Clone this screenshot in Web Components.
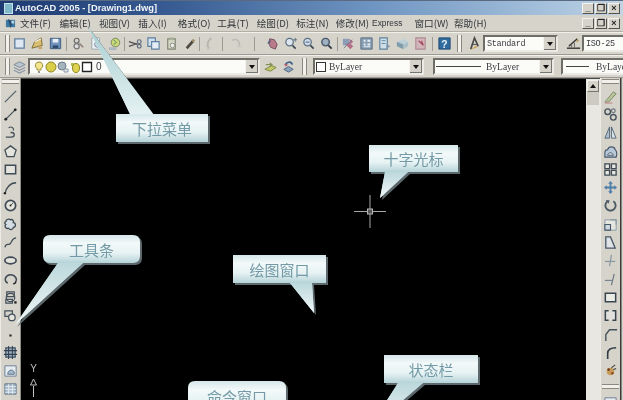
<!DOCTYPE html>
<html lang="zh"><head><meta charset="utf-8"><title>AutoCAD 2005</title>
<style>html,body{margin:0;padding:0;background:#000;overflow:hidden;width:623px;height:400px}</style>
</head><body>
<cad-app>
  <cad-titlebar slot="top">AutoCAD 2005 - [Drawing1.dwg]</cad-titlebar>
  <cad-menubar slot="top" items="文件(F)|编辑(E)|视图(V)|插入(I)|格式(O)|工具(T)|绘图(D)|标注(N)|修改(M)|Express|窗口(W)|帮助(H)"></cad-menubar>
  <cad-toolbar slot="top" h="23">
    <cad-grip></cad-grip>
    <cad-icon n="new"></cad-icon><cad-icon n="open"></cad-icon><cad-icon n="save"></cad-icon><cad-sep w="5"></cad-sep>
    <cad-icon n="plot"></cad-icon><cad-icon n="preview"></cad-icon><cad-icon n="publish"></cad-icon><cad-sep w="3"></cad-sep>
    <cad-icon n="cut"></cad-icon><cad-icon n="copy"></cad-icon><cad-icon n="paste"></cad-icon><cad-icon n="brush"></cad-icon><cad-sep w="2"></cad-sep>
    <cad-icon n="undo"></cad-icon><cad-sep w="9"></cad-sep><cad-icon n="redo"></cad-icon><cad-sep w="18"></cad-sep>
    <cad-icon n="pan"></cad-icon><cad-icon n="zoom"></cad-icon><cad-icon n="zoom2"></cad-icon><cad-icon n="zoom3"></cad-icon><cad-sep w="4"></cad-sep>
    <cad-icon n="props"></cad-icon><cad-icon n="grid"></cad-icon><cad-icon n="tool"></cad-icon><cad-icon n="cube"></cad-icon><cad-icon n="mark"></cad-icon><cad-sep w="6"></cad-sep>
    <cad-icon n="help"></cad-icon><cad-grip style="margin:0 3px 0 4px"></cad-grip>
    <cad-icon n="texta"></cad-icon>
    <cad-combo w="75" h="17" mono>Standard</cad-combo>
    <cad-icon n="dim" style="margin-left:6px"></cad-icon>
    <cad-combo w="45" h="17" mono noarrow>ISO-25</cad-combo>
  </cad-toolbar>
  <cad-toolbar slot="top" h="24">
    <cad-grip></cad-grip>
    <cad-icon n="layers"></cad-icon>
    <cad-combo w="232" h="17" layer>0</cad-combo>
    <cad-icon n="match" style="margin-left:1px"></cad-icon><cad-icon n="prev"></cad-icon><cad-grip style="margin:0 0 0 5px"></cad-grip>
    <cad-combo w="111" h="17" swatch style="margin-left:6px">ByLayer</cad-combo>
    <cad-combo w="121" h="17" line style="margin-left:9px">ByLayer</cad-combo>
    <cad-combo w="70" h="17" line short noarrow style="margin-left:7px">ByLayer</cad-combo>
  </cad-toolbar>
  <cad-dock slot="left" names="line xline pline polygon rect arc circle cloud spline ellipse earc insert block point hatch region table"></cad-dock>
  <cad-canvas slot="canvas"><cad-ucs></cad-ucs></cad-canvas>
  <cad-scroll slot="scroll"></cad-scroll>
  <cad-dock slot="right" names="erase ccopy mirror offset array move rotate scale stretch trim extend break join chamfer fillet explode"></cad-dock>

  <cad-crosshair slot="over"></cad-crosshair>
  <cad-callout slot="over" box="116,114,92,28" tail="top:130,88,27,153">下拉菜单</cad-callout>
  <cad-callout slot="over" box="369,145,89,27" tail="bottom:385,380,198,408">十字光标</cad-callout>
  <cad-callout slot="over" box="43,235,97,28" r="7" tail="bottom:58,15,325,83">工具条</cad-callout>
  <cad-callout slot="over" box="233,255,93,28" tail="bottom:290,314,313,312">绘图窗口</cad-callout>
  <cad-callout slot="over" box="384,355,94,28" tail="bottom:398,368,430,423">状态栏</cad-callout>
  <cad-callout slot="over" box="188,381,98,30" r="7">命令窗口</cad-callout>
</cad-app>
<script>
const ICONS={
new:`<path d="M3 3h10v10H3z" fill="#dfe8f2" stroke="#5f7f9f" stroke-width="1.4"/>`,
open:`<path d="M2 13l3-7 7-4 1 8z" fill="#d8c070" stroke="#7a6a38"/><path d="M5 6l7-3" stroke="#fff"/><path d="M9 11h4v3H9z" fill="#c9a66a"/>`,
save:`<path d="M2.5 2.5h11v11h-11z" fill="#6f92bd" stroke="#38577d"/><path d="M5 3h6v4H5z" fill="#e8eef4"/><path d="M5 10h6v3H5z" fill="#2e4a6e"/>`,
plot:`<circle cx="6" cy="5" r="2.6" fill="none" stroke="#6d6d6d" stroke-width="1.3"/><circle cx="6" cy="11" r="2.8" fill="#ddd" stroke="#777" stroke-width="1.3"/><path d="M9 8l4 4" stroke="#8a7a70" stroke-width="1.5"/>`,
preview:`<path d="M3 2h8v12H3z" fill="#eef2f6" stroke="#9aa6b0"/><circle cx="9" cy="9" r="3" fill="#cfe0ee" stroke="#6f8296"/><path d="M11 11l3 3" stroke="#555" stroke-width="1.4"/>`,
publish:`<circle cx="9" cy="7" r="4.6" fill="#c9d87a" stroke="#77845a"/><path d="M2 12h8v3H2z" fill="#aeb8c0"/><path d="M7 4l3 3-3 2" fill="none" stroke="#5b8a5a"/>`,
cut:`<path d="M1 6l9 3M1 11l9-3" stroke="#50504e" stroke-width="1.4"/><circle cx="12" cy="6" r="2" fill="none" stroke="#5d6a78" stroke-width="1.3"/><circle cx="12" cy="11" r="2" fill="none" stroke="#5d6a78" stroke-width="1.3"/>`,
copy:`<path d="M2 2h8v9H2z" fill="#cfdfee" stroke="#5c7fa0" stroke-width="1.2"/><path d="M6 6h8v8H6z" fill="#e4edf5" stroke="#5c7fa0" stroke-width="1.2"/>`,
paste:`<path d="M4 3h8v11H4z" fill="#d8d8c6" stroke="#7f8270" stroke-width="1.2"/><path d="M6 1.5h4v3H6z" fill="#aab09a"/><circle cx="9" cy="10" r="2.4" fill="#eee" stroke="#8a9080"/>`,
brush:`<path d="M4 12l7-8 2 2-7 8z" fill="#4e4a42"/><path d="M10 5l2-2 2 2-2 2z" fill="#a08c6a"/>`,
undo:`<path d="M10 2c-4 3-5 7-3 12" fill="none" stroke="#b6b6ae" stroke-width="2"/><path d="M4 10l3 4 3-3" fill="none" stroke="#c6c6c0"/>`,
redo:`<path d="M3 5c5-3 9 0 8 6" fill="none" stroke="#bdbdb5" stroke-width="1.7"/><path d="M8 10l3 3 3-3" fill="none" stroke="#c6c6c0"/>`,
pan:`<path d="M5 3c-1 3-1 6 1 9l5 2 2-5-3-5z" fill="#b97a8a" stroke="#705060"/><path d="M3 8l3-3" stroke="#4a5d78" stroke-width="1.5"/>`,
zoom:`<circle cx="7" cy="6.5" r="4" fill="#dbe5ee" stroke="#5d7082" stroke-width="1.3"/><path d="M10 10l3.5 3.5" stroke="#3d4a56" stroke-width="1.8"/><path d="M13 2v4M11 4h4" stroke="#5d7082"/>`,
zoom2:`<circle cx="7" cy="6.5" r="4" fill="#cfdbe8" stroke="#5d7082" stroke-width="1.3"/><path d="M10 10l3.5 3.5" stroke="#3d4a56" stroke-width="1.8"/><path d="M5 6.5h4" stroke="#3d5a78"/>`,
zoom3:`<circle cx="7" cy="6.5" r="4" fill="#9fb0c0" stroke="#46586a" stroke-width="1.5"/><path d="M10 10l3.5 3.5" stroke="#2f3a46" stroke-width="2"/>`,
props:`<path d="M2 3h7v7H2z" fill="#8a9cb8"/><path d="M9 3l4 3-3 3zM5 9l5 5 3-3-4-4z" fill="#b46e88"/><path d="M3 13l9-9" stroke="#7a7a8a"/>`,
grid:`<path d="M2 2h12v12H2z" fill="#8aa0b4" stroke="#536a80"/><path d="M5 4h2v2H5zM9 4h3v2H9zM5 8h2v2H5zM9 8h3v2H9zM5 11h7v1H5z" fill="#e6eef4"/>`,
tool:`<path d="M3 2h8v12H3z" fill="#cfdfe9" stroke="#5e829c" stroke-width="1.2"/><path d="M5 5h4M5 8h4" stroke="#5e829c"/><path d="M10 8l4 3-4 3z" fill="#7f97ab"/>`,
cube:`<path d="M2 6l7-3 5 3-5 3z" fill="#bdd0d8"/><path d="M2 6v5l7 3V9z" fill="#7f9cab"/><path d="M9 9v5l5-3V6z" fill="#a9c0c8"/>`,
mark:`<path d="M3 2h10v12H3z" fill="#d3b6bc" stroke="#ad8a94" stroke-width="1.2"/><path d="M6 5l5 5M9 5l2 5" stroke="#a84b60" stroke-width="1.4"/>`,
help:`<path d="M2 2h12v12H2z" fill="#2f6b9e" stroke="#204a70"/><text x="8" y="12.5" font-family="Liberation Sans" font-size="11" font-weight="700" fill="#e8f2fa" text-anchor="middle">?</text>`,
texta:`<path d="M4 14L8 2l4 9" fill="none" stroke="#4a4a48" stroke-width="1.7"/><path d="M5 9h6" stroke="#4a4a48"/><path d="M3 15l7-5 1 2z" fill="#c9a45a"/>`,
dim:`<path d="M1 13h14" stroke="#333" stroke-width="1.5"/><path d="M3 11l9-8" stroke="#333" stroke-width="1.5"/><path d="M6 12v-3M9 12V7" stroke="#666"/><path d="M12 3l2 2-3 2z" fill="#b59a50"/>`,
layers:`<path d="M2 6l6-3 6 3-6 3z" fill="#b9c6d0" stroke="#7a8a98"/><path d="M2 9l6 3 6-3M2 12l6 3 6-3" fill="none" stroke="#8a98a4" stroke-width="1.2"/>`,
match:`<path d="M2 11l7-4 5 2-6 4z" fill="#bfc76a" stroke="#7e8a40"/><path d="M3 6h6M7 4l3 2-3 2" stroke="#718040" fill="none"/>`,
prev:`<path d="M3 11l5-3 5 3-5 3z" fill="#8ba1ba" stroke="#4f6680"/><path d="M5 7c0-4 6-5 7-1" fill="none" stroke="#3f5f88" stroke-width="1.8"/><path d="M3 5l2 3 3-2z" fill="#b86070"/>`,
line:`<path d="M2 14L14 2" stroke="#55606a" stroke-width="1.4"/>`,
xline:`<path d="M2 14L14 2" stroke="#44505a" stroke-width="1.4"/><circle cx="3" cy="13" r="1.5" fill="#222"/><circle cx="13" cy="3" r="1.5" fill="#222"/>`,
pline:`<path d="M3 13h6c4 0 4-5 0-5H8" fill="none" stroke="#44505a" stroke-width="1.4"/><path d="M6 3c3-2 6 0 5 3" fill="none" stroke="#44505a" stroke-width="1.2"/>`,
polygon:`<path d="M8 2l6 4.5-2.3 7H4.3L2 6.500z" fill="#e4e4dd" stroke="#3f4b55" stroke-width="1.4"/>`,
rect:`<path d="M2.500 3.500h11v9h-11z" fill="#e4e4dd" stroke="#3f4b55" stroke-width="1.6"/>`,
arc:`<path d="M2 15C3 8 8 3 14 3" fill="none" stroke="#3f4b55" stroke-width="1.5"/><circle cx="2" cy="14" r="1.3" fill="#222"/>`,
circle:`<circle cx="8" cy="8" r="5.5" fill="#e4e4dd" stroke="#3f4b55" stroke-width="1.8"/><path d="M8 8l3-3" stroke="#3f4b55"/><circle cx="8" cy="8" r="1" fill="#222"/>`,
cloud:`<path d="M3 5c0-3 4-3 5-2 2-1 4 1 3 3 3 0 3 5 0 5 0 3-4 3-5 1-3 1-5-2-3-4-2-1-1-3 0-3z" fill="#d4dde2" stroke="#3f4b55" stroke-width="1.4"/>`,
spline:`<path d="M2 13c2-6 4-1 6-4s2-6 6-6" fill="none" stroke="#3f4b55" stroke-width="1.3"/>`,
ellipse:`<ellipse cx="8" cy="8" rx="6" ry="3.5" fill="#e4e4dd" stroke="#3f4b55" stroke-width="1.8"/>`,
earc:`<path d="M5 12C0 9 3 3 8 3s8 5 5 8" fill="none" stroke="#3f4b55" stroke-width="1.6"/><path d="M11 13l3-2" stroke="#222" stroke-width="1.6"/>`,
insert:`<path d="M4 2h8v5H4z" fill="none" stroke="#44505a" stroke-width="1.3"/><circle cx="8" cy="8" r="4.5" fill="none" stroke="#44505a" stroke-width="1.3"/><path d="M3 10h7v4H3z" fill="none" stroke="#44505a" stroke-width="1.3"/><rect x="12" y="12" width="2.5" height="2.5" fill="#222"/>`,
block:`<path d="M2 3h8v6H2z" fill="none" stroke="#44505a" stroke-width="1.3"/><circle cx="9.5" cy="10" r="3.5" fill="#e4e4dd" stroke="#44505a" stroke-width="1.3"/>`,
point:`<circle cx="8" cy="9" r="1.3" fill="#333"/>`,
hatch:`<path d="M3 3h10v10H3z" fill="#9fb0c0" stroke="#3f5060" stroke-width="1.3"/><path d="M1 6h14M1 10h14M6 1v14M10 1v14" stroke="#2f3f50" stroke-width="1.1"/>`,
region:`<path d="M2 3h12v11H2z" fill="#e7ecf0" stroke="#6a7f92"/><path d="M5 12c0-5 6-6 7-2v2z" fill="#a6bccd" stroke="#5a7084"/>`,
table:`<path d="M2 3h12v11H2z" fill="#a9bccc" stroke="#5c7488"/><path d="M2 6h12M2 9h12M2 12h12M6 3v11M10 3v11" stroke="#eef3f6" stroke-width=".8"/>`,
erase:`<path d="M2 14l9-11 3 2-8 9z" fill="#b9c49a" stroke="#7a8866"/><path d="M2 15h8" stroke="#c89aa0" stroke-width="1.5"/>`,
ccopy:`<circle cx="5" cy="5" r="3" fill="none" stroke="#46525c" stroke-width="1.5"/><circle cx="11" cy="11" r="3" fill="none" stroke="#46525c" stroke-width="1.5"/><circle cx="11" cy="4" r="2" fill="none" stroke="#68747e" stroke-width="1.2"/>`,
mirror:`<path d="M7 2v12H2z" fill="#b0c0d0" stroke="#54667a"/><path d="M9 2v12h5z" fill="#d8e0e8" stroke="#54667a"/>`,
offset:`<path d="M2 14V9c0-3 2-3 3-3 1-4 7-4 8 0c2 2 2 5 1 8z" fill="#b8c8d8" stroke="#46586a" stroke-width="1.2"/><path d="M5 12c0-3 5-4 6 0z" fill="#e6ecf0" stroke="#46586a"/>`,
array:`<path d="M2 2h5v5H2zM9 2h5v5H9zM2 9h5v5H2zM9 9h5v5H9z" fill="#e8e8e2" stroke="#3e4a54" stroke-width="1.4"/>`,
move:`<path d="M8 1l2.500 3H9v3h3V5.500L15 8l-3 2.500V9H9v3h1.500L8 15l-2.500-3H7V9H4v1.500L1 8l3-2.500V7h3V4H5.500z" fill="#4f7ea8"/>`,
rotate:`<path d="M11 3.500a5.500 5.500 0 1 1-6 0" fill="none" stroke="#4c5a66" stroke-width="2"/><path d="M3 2l4 .5-1 3.500z" fill="#4c5a66"/>`,
scale:`<path d="M2 3h12v11H2z" fill="#e6e6e0" stroke="#8a98a4"/><path d="M2 8h6v6H2z" fill="#cfd8df" stroke="#46586a" stroke-width="1.2"/><path d="M8 3h6v5" fill="none" stroke="#8a98a4" stroke-width="1.2"/>`,
stretch:`<path d="M3 2h5l5 12H3z" fill="#dfe3e6" stroke="#46586a" stroke-width="1.4"/>`,
trim:`<path d="M9 2L7 14" stroke="#8a98a4" stroke-width="1.3"/><path d="M2 9h11" stroke="#8a98a4" stroke-width="1.3"/>`,
extend:`<path d="M12 2l-3 12" stroke="#6a7682" stroke-width="1.3"/><path d="M2 9h8" stroke="#7a8692" stroke-width="1.3"/>`,
break:`<path d="M2.500 3.500h11v9h-11z" fill="#ececE6" stroke="#38444e" stroke-width="1.6"/>`,
join:`<path d="M3 3h10v10H3z" fill="#eee" opacity=".5"/><path d="M6 3H2.500v10H6M10 3h3.500v10H10" fill="none" stroke="#38444e" stroke-width="1.6"/>`,
chamfer:`<path d="M3 15V8l4-5h8" fill="none" stroke="#46525c" stroke-width="1.5"/>`,
fillet:`<path d="M5 15V9c0-4 3-6 9-6" fill="none" stroke="#303c46" stroke-width="1.7"/>`,
explode:`<circle cx="8" cy="9" r="4" fill="#c89a5a"/><circle cx="6" cy="7" r="1.4" fill="#6b3f20"/><circle cx="10" cy="11" r="1.3" fill="#8a4a20"/><path d="M9 5l4-3M11 7l3-1" stroke="#4c4c48" stroke-width="1.2"/>`
};
function def(name,css,html){
  customElements.define(name,class extends HTMLElement{
    constructor(){super();const r=this.attachShadow({mode:'open'});
      r.innerHTML=`<style>${css}</style>`+(typeof html==='function'?html(this):html);}
  });
}
const CJK='"Noto Sans CJK SC","Liberation Sans",sans-serif';
def('cad-app',`:host{display:block;position:relative;width:623px;height:400px;overflow:hidden;background:#d6d3cb;font-family:${CJK}}
 .wrap{display:flex;flex-direction:column;height:400px;filter:blur(.35px)}
 .main{display:flex;flex:1;min-height:0}
 .edge{width:3px;background:linear-gradient(90deg,#3a3a3a 0 1px,#8a8880 1px 2px,#d6d3cb 2px)}
 .canvas{flex:1;min-width:0;display:flex;border-top:1px solid #4a4a4a}`,
 `<div class="wrap"><slot name="top"></slot><div class="main"><slot name="left"></slot><div class="canvas"><slot name="canvas"></slot><slot name="scroll"></slot></div><slot name="right"></slot><div class="edge"></div></div></div><slot name="over"></slot>`);
def('cad-titlebar',`:host{display:flex;align-items:center;height:15px;padding-left:4px;gap:2px;background:linear-gradient(90deg,#1e3a72 0,#34588f 25%,#6f95c2 60%,#a9c4dd 90%,#c2d4e4);color:#f2f5f8;font:700 9.3px "Liberation Sans",sans-serif;border-top:1px solid #5a6a80;box-sizing:border-box;white-space:nowrap}
 .logo{width:9px;height:11px;background:#7fb8c8;border:1px solid #c8e0e8;box-sizing:border-box}
 .t{flex:1}`,
 `<span class="logo"></span><span class="t"><slot></slot></span><cad-winbtns></cad-winbtns>`);
def('cad-winbtns',`:host{display:flex;gap:1px;margin-right:3px}
 b{display:flex;align-items:center;justify-content:center;width:12px;height:11px;background:#d6d3cb;border:1px solid;border-color:#f4f2ee #55534e #55534e #f4f2ee;box-sizing:border-box;color:#222;font:700 9px/1 "Liberation Sans",sans-serif}`,
 `<b>_</b><b>❐</b><b>×</b>`);
def('cad-menubar',`:host{display:flex;align-items:center;height:17px;padding-left:5px;box-sizing:border-box;background:#d6d3cb;color:#33363a;font:400 9.6px/17px ${CJK};white-space:nowrap;border-bottom:1px solid #b0aea6}
 .logo{width:11px;height:11px;margin-right:-1px}
 span{padding:0 5px;width:30px;text-align:left;box-sizing:content-box;margin-right:-.55px}
 .lat{font:400 8.4px/17px "Liberation Sans",sans-serif;margin-left:-3px;margin-right:2.45px}
 .sp{flex:1}`,
 el=>{const it=el.getAttribute('items').split('|').map(t=>`<span${t==='Express'?' class="lat"':''}>${t}</span>`).join('');
  return `<svg class="logo" viewBox="0 0 12 12"><path d="M1 2h10v8H1z" fill="#3f78a0"/><path d="M3 1l6 3-3 7z" fill="#234d70"/><path d="M7 3h3v3H7z" fill="#b8d8e8"/></svg>${it}<i class="sp"></i><cad-winbtns></cad-winbtns>`;});
def('cad-toolbar',`:host{display:flex;align-items:center;height:23px;padding-left:5px;box-sizing:border-box;background:#d6d3cb;border-top:1px solid #f2f0ea;border-bottom:1px solid #9b9992;overflow:hidden;white-space:nowrap}`,`<slot></slot>`);
def('cad-grip',`:host{display:block;flex:none;width:5px;height:17px;border-left:1px solid #8a8880;border-right:1px solid #8a8880;background:#f2f0ea;box-sizing:border-box}`,``);
def('cad-sep',`:host{display:block;flex:none;height:14px;position:relative}
 i{display:block;width:1px;height:14px;background:#9d9b94;margin:0 auto}`,
 el=>{el.style.width=(el.getAttribute('w')||5)+'px';return '<i></i>';});
def('cad-icon',`:host{display:flex;flex:none;width:18px;height:18px;align-items:center;justify-content:center}
 svg{width:15px;height:15px;display:block}`,
 el=>`<svg viewBox="0 0 16 16">${ICONS[el.getAttribute('n')]||''}</svg>`);
def('cad-combo',`:host{display:flex;flex:none;align-items:center;box-sizing:border-box;background:#fbfbf8;border:2px solid;border-color:#6f6d68 #eceae4 #eceae4 #6f6d68;color:#3a3d42;font:400 9.5px "Liberation Serif",serif;overflow:hidden;white-space:nowrap}
 :host([mono]){font:400 8.5px "Liberation Mono",monospace;letter-spacing:-.3px;padding-left:2px}
 .body{flex:1;display:flex;align-items:center;min-width:0;gap:2px}
 .arr{flex:none;width:12px;height:100%;background:#d6d3cb;border-left:1px solid #f4f2ee;display:flex;align-items:center;justify-content:center;box-shadow:inset -1px -1px 0 #77756f}
 .arr::after{content:"";border:3px solid transparent;border-top:4px solid #111;border-bottom:0}
 .sw{width:8px;height:8px;border:1px solid #333;background:#fff;margin:0 1px 0 1px;flex:none}
 .ln{height:1px;background:#444;flex:none;width:45px;margin:0 3px 0 1px}
 .ic{display:flex;align-items:center;margin-left:3px;gap:0}
 svg{width:12px;height:12px;display:block}
 .z{font:400 10px "Liberation Sans",sans-serif;margin-left:1px}`,
 el=>{
  el.style.width=el.getAttribute('w')+'px';el.style.height=el.getAttribute('h')+'px';
  let pre='';
  if(el.hasAttribute('layer'))pre=`<span class="ic"><svg viewBox="0 0 12 12"><path d="M6 1a3.500 3.500 0 0 1 2 6.500V9H4V7.500A3.500 3.500 0 0 1 6 1z" fill="#f3e58a" stroke="#9a8c40"/><path d="M5 11h2" stroke="#777" stroke-width="1.5"/></svg><svg viewBox="0 0 12 12"><circle cx="6" cy="6" r="5" fill="#d9cd4a" stroke="#8f8628"/></svg><svg viewBox="0 0 12 12"><circle cx="5" cy="5" r="4" fill="#a6b4c0" stroke="#6d7c88"/><path d="M7 8h4v3H7z" fill="#e4eaf0" stroke="#8a96a0"/></svg><svg viewBox="0 0 12 12"><path d="M2 2h3v3H2z" fill="#b7c050"/><ellipse cx="7" cy="7" rx="3.5" ry="4.5" fill="#e0d44e" stroke="#8f8628"/></svg><svg viewBox="0 0 12 12"><path d="M1.500 1.500h9v9h-9z" fill="#fff" stroke="#222" stroke-width="1.3"/></svg></span>`;
  if(el.hasAttribute('swatch'))pre='<span class="sw"></span>';
  if(el.hasAttribute('line'))pre=`<span class="ln" ${el.hasAttribute('short')?'style="width:23px;margin-right:5px;margin-left:3px"':''}></span>`;
  const arr=(el.hasAttribute('noarrow'))?'':'<span class="arr"></span>';
  const cls=el.hasAttribute('layer')?'z':'';
  return `<span class="body">${pre}<span class="${cls}"><slot></slot></span></span>${arr}`;});
def('cad-dock',`:host{display:flex;flex-direction:column;flex:none;align-items:center;width:21px;box-sizing:border-box;background:#d6d3cb;padding-top:1px;border-right:1px solid #8d8b85;border-left:1px solid #eceae4;overflow:hidden}
 :host([slot=right]){width:20px;border-right:0}
 .g{width:17px;height:5px;border-top:1px solid #8a8880;border-bottom:1px solid #8a8880;background:#f2f0ea;box-sizing:border-box;margin-bottom:3px;flex:none}
 .i{flex:none;height:18.3px;display:flex;align-items:center}`,
 el=>{const a=el.getAttribute('names').split(' ').map(n=>`<span class="i"><cad-icon n="${n}"></cad-icon></span>`).join('');
  return `<i class="g"></i>${a}<i class="g" style="margin:4px 0 5px"></i><span class="i"><cad-icon n="region"></cad-icon></span>`;});
def('cad-canvas',`:host{display:block;flex:1;background:#000;position:relative;min-width:0}`,`<slot></slot>`);
def('cad-ucs',`:host{position:absolute;left:6px;bottom:0;width:22px;height:36px;color:#bdbdbd}
 b{position:absolute;left:1px;top:0;width:11px;text-align:center;font:400 10px/1 "Liberation Sans",sans-serif}
 svg{position:absolute;left:-1px;top:11px}`,
 `<b>Y</b><svg width="15" height="25"><path d="M7.500 22V11M4.500 10l3-6 3 6z" fill="none" stroke="#c4c4c4" stroke-width="1"/></svg>`);
def('cad-scroll',`:host{display:flex;flex-direction:column;flex:none;width:14px;background:#e9e7e1;box-sizing:border-box;padding-left:1px}
 .b{height:12px;width:12px;margin-top:1px;background:#d6d3cb;border:1px solid;border-color:#f4f2ee #77756f #77756f #f4f2ee;box-sizing:border-box;display:flex;align-items:center;justify-content:center}
 .b::after{content:"";border:3px solid transparent;border-bottom:4px solid #111;border-top:0}
 .t{height:13px;width:12px;background:#cdcac2}`,`<div class="b"></div><div class="t"></div>`);
def('cad-crosshair',`:host{position:absolute;left:354px;top:195px;width:32px;height:33px}
 svg{display:block;filter:blur(.4px)}`,
 `<svg width="32" height="33"><path d="M0 16.500h32M16 0v33" stroke="#a8a8a8"/><rect x="13.500" y="14" width="5" height="5" fill="#555" stroke="#b5b5b5"/></svg>`);
customElements.define('cad-callout',class extends HTMLElement{
 constructor(){super();
  const [x,y,w,h]=this.getAttribute('box').split(',').map(Number);
  const r=+(this.getAttribute('r')||0);
  const tail=this.getAttribute('tail');
  let side='',a=0,tx=0,ty=0,b=0;
  if(tail){const p=tail.split(':');side=p[0];[a,tx,ty,b]=p[1].split(',').map(Number);}
  const x2=x+w,y2=y+h;
  let d=`M${x+r} ${y}`;
  if(side==='top')d+=`L${a} ${y}L${tx} ${ty}L${b} ${y}`;
  d+=`L${x2-r} ${y}Q${x2} ${y} ${x2} ${y+r}L${x2} ${y2-r}Q${x2} ${y2} ${x2-r} ${y2}`;
  if(side==='bottom')d+=`L${b} ${y2}L${tx} ${ty}L${a} ${y2}`;
  d+=`L${x+r} ${y2}Q${x} ${y2} ${x} ${y2-r}L${x} ${y+r}Q${x} ${y} ${x+r} ${y}Z`;
  const id='g'+x, baseY=side==='top'?y:y2;
  const tailFill=side?`<linearGradient id="${id}t" gradientUnits="userSpaceOnUse" x1="0" y1="${baseY}" x2="0" y2="${ty}">${side==='top'?'<stop offset="0" stop-color="#e4f1f2"/><stop offset="1" stop-color="#a9cfd2"/>':'<stop offset="0" stop-color="#bcd8dc"/><stop offset="1" stop-color="#f2f8f8"/>'}</linearGradient>`:'';
  const tailPath=side?`<path d="M${a} ${baseY}L${tx} ${ty}L${b} ${baseY}Z" fill="url(#${id}t)"/>`:'';
  const s=this.attachShadow({mode:'open'});
  s.innerHTML=`<style>:host{position:absolute;left:0;top:0;width:623px;height:400px;pointer-events:none}
   svg{position:absolute;left:0;top:0;filter:blur(.4px)}
   .t{position:absolute;left:${x}px;top:${y}px;width:${w}px;height:${h}px;display:flex;align-items:center;justify-content:center;color:#739aa6;font:400 15px/1 "Noto Sans CJK SC","Noto Sans CJK TC",sans-serif;white-space:nowrap;filter:blur(.3px)}</style>
   <svg width="623" height="400"><defs><linearGradient id="${id}" gradientUnits="userSpaceOnUse" x1="0" y1="${y}" x2="0" y2="${y2}">
   <stop offset="0" stop-color="#d5e7ea"/><stop offset=".3" stop-color="#f3f9f9"/><stop offset=".65" stop-color="#e6f2f3"/><stop offset="1" stop-color="#b5d3d8"/></linearGradient>${tailFill}</defs>
   <path d="${d}" transform="translate(2 2)" fill="#5d686c"/><path d="${d}" fill="url(#${id})"/>${tailPath}</svg>
   <div class="t"><slot></slot></div>`;
 }
});
</script>
</body></html>
